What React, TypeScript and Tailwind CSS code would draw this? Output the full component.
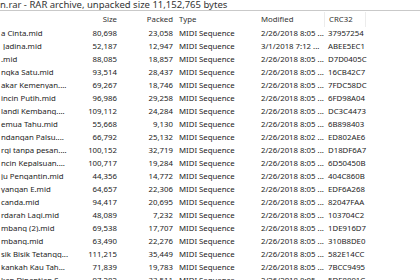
const rows = [
  ['a Cinta.mid', '80,698', '23,058', '2/26/2018 8:05 ...', '37957254'],
  ['\u00a0Jadina.mid', '52,187', '12,947', '3/1/2018 7:12 ...', 'ABEE5EC1'],
  ['.mid', '88,085', '18,857', '2/26/2018 8:05 ...', 'D7D0405C'],
  ['ngka Satu.mid', '93,514', '28,437', '2/26/2018 8:05 ...', '16CB42C7'],
  ['akar Kemenyan....', '69,267', '18,746', '2/26/2018 8:05 ...', '7FDC58DC'],
  ['incin Putih.mid', '96,986', '29,258', '2/26/2018 8:05 ...', '6FD98A04'],
  ['landi Kembang....', '109,112', '24,284', '2/26/2018 8:05 ...', 'DC3C4473'],
  ['emua Tahu.mid', '55,668', '9,130', '2/26/2018 8:05 ...', '6B898403'],
  ['ndangan Palsu....', '66,792', '25,132', '2/26/2018 8:02 ...', 'ED802AE6'],
  ['rgi tanpa pesan....', '100,152', '32,719', '2/26/2018 8:05 ...', 'D18DF6A7'],
  ['ncin Kepalsuan....', '100,717', '19,284', '2/26/2018 8:05 ...', '6D50450B'],
  ['ju Pengantin.mid', '44,356', '14,772', '2/26/2018 8:05 ...', '404C860B'],
  ['yangan E.mid', '64,657', '22,306', '2/26/2018 8:05 ...', 'EDF6A268'],
  ['canda.mid', '94,417', '20,695', '2/26/2018 8:05 ...', '82047FAA'],
  ['rdarah Lagi.mid', '48,089', '7,232', '2/26/2018 8:05 ...', '103704C2'],
  ['mbang (2).mid', '69,538', '17,707', '2/26/2018 8:05 ...', '1DE916D7'],
  ['mbang.mid', '63,490', '22,276', '2/26/2018 8:05 ...', '310B8DE0'],
  ['sik Bisik Tetangg...', '111,215', '35,449', '2/26/2018 8:05 ...', '582E14CC'],
  ['kankah Kau Tah...', '71,839', '19,783', '2/26/2018 8:05 ...', '7BCC9495'],
  ['kan Dinantian S...', '97,282', '33,511', '2/26/2018 8:05 ...', '5DE8891C'],
]

const cols = 'grid grid-cols-[70px_50px_56px_81px_67px_42px_1fr]'

export default function App() {
  return (
    <div className="w-[420px] h-[280px] overflow-hidden bg-white text-[#1c1c1c] text-[7.8px] leading-none font-['Noto_Sans',sans-serif]">
      {/* title */}
      <div className="h-[11px] border-b border-[#c9c9c9] flex items-end pb-[1px] whitespace-nowrap text-[#333] text-[9.5px]">
        n.rar - RAR archive, unpacked size 11,152,765 bytes
      </div>

      {/* header */}
      <div className={`${cols} h-[16px] items-center text-[#333] border-t border-white`}>
        <div />
        <div className="text-right pr-[3px]">Size</div>
        <div className="text-right pr-[3px]">Packed</div>
        <div className="pl-[3px]">Type</div>
        <div className="pl-[4px] h-full flex items-center">Modified</div>
        <div className="pl-[4px] h-full flex items-center border-l border-[#ececec] border-r">CRC32</div>
        <div />
      </div>

      {/* rows */}
      <div className="flex flex-col">
        {rows.map((r) => (
          <div key={r[4]} className={`${cols} h-[13px] items-center whitespace-nowrap`}>
            <div className="pl-[1px] overflow-hidden">{r[0]}</div>
            <div className="text-right pr-[3px]">{r[1]}</div>
            <div className="text-right pr-[3px]">{r[2]}</div>
            <div className="pl-[3px]">MIDI Sequence</div>
            <div className="pl-[4px]">{r[3]}</div>
            <div className="pl-[4px]">{r[4]}</div>
            <div />
          </div>
        ))}
      </div>
    </div>
  )
}
